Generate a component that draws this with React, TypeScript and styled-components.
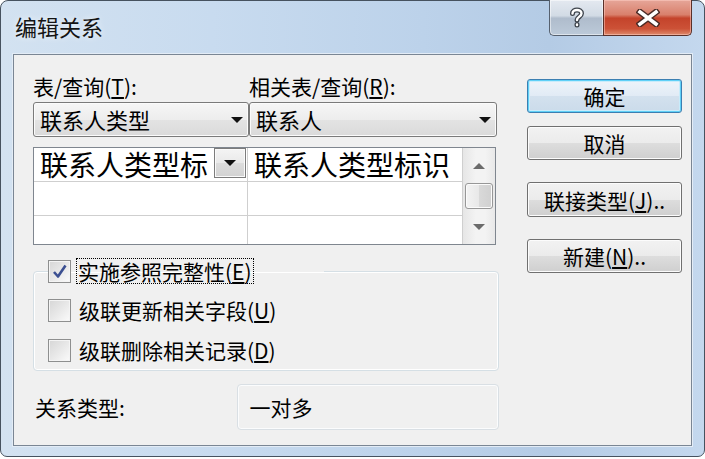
import React from 'react';
import styled, { createGlobalStyle, css } from 'styled-components';

const GlobalStyle = createGlobalStyle`
  html, body {
    margin: 0;
    padding: 0;
    background: #ffffff;
  }
  body {
    font-family: "Noto Sans CJK SC", "Noto Sans", sans-serif;
    font-size: 21px;
    color: #000;
  }
  * {
    box-sizing: border-box;
  }
`;

const Window = styled.div`
  width: 705px;
  height: 457px;
  display: flex;
  flex-direction: column;
  padding: 0 12px 10px 12px;
  border: 1px solid #46525f;
  border-radius: 8px 8px 7px 7px;
  background: linear-gradient(90deg, #d3e2f1 0%, #c8dbef 30%, #bcd2ea 60%, #b4cbe5 78%, #c4d8ee 100%);
`;

const TitleBar = styled.div`
  height: 53px;
  flex: none;
  display: flex;
  justify-content: space-between;
  align-items: flex-start;
`;

const Title = styled.div`
  margin: 12px 0 0 2px;
  font-size: 22px;
  line-height: 26px;
  color: #141414;
  text-shadow: 0 0 6px rgba(255, 255, 255, 0.8);
`;

const Captions = styled.div`
  display: flex;
  margin-top: -1px;
`;

const CaptionButton = styled.div<{ $kind: 'help' | 'close' }>`
  height: 36px;
  display: flex;
  align-items: center;
  justify-content: center;
  border: 1px solid #56606e;
  border-top: none;
  ${({ $kind }) =>
    $kind === 'help'
      ? css`
          width: 54px;
          border-radius: 0 0 0 5px;
          border-right: none;
          background: linear-gradient(180deg, #e4e9f0 0%, #d2dbe5 45%, #afbccc 52%, #bccad9 100%);
          box-shadow: inset 0 0 0 1px rgba(255, 255, 255, 0.5);
        `
      : css`
          width: 89px;
          border-radius: 0 0 5px 0;
          border-color: #5a3029;
          background: linear-gradient(180deg, #e6a699 0%, #d9806c 42%, #c4432b 52%, #cc5237 82%, #de8a6b 100%);
          box-shadow: inset 0 0 0 1px rgba(255, 210, 200, 0.5);
        `}
`;

const HelpIcon = () => (
  <svg width="16" height="22" viewBox="0 0 16 22">
    <g fill="none" strokeLinecap="round" strokeLinejoin="round">
      <path d="M3.5 6.5 C3.5 1.8 12.5 1.8 12.5 6.5 C12.5 9.5 8 9.8 8 13" stroke="#3d434b" strokeWidth="5" />
      <path d="M8 17.5 L8 18" stroke="#3d434b" strokeWidth="5" />
      <path d="M3.5 6.5 C3.5 1.8 12.5 1.8 12.5 6.5 C12.5 9.5 8 9.8 8 13" stroke="#ffffff" strokeWidth="2.4" />
      <path d="M8 17.5 L8 18" stroke="#ffffff" strokeWidth="2.4" />
    </g>
  </svg>
);

const CloseIcon = () => (
  <svg width="24" height="18" viewBox="0 0 24 18">
    <g strokeLinecap="square">
      <path d="M4 3 L20 15 M20 3 L4 15" stroke="#4a2a25" strokeWidth="6.5" />
      <path d="M4 3 L20 15 M20 3 L4 15" stroke="#ffffff" strokeWidth="3.6" />
    </g>
  </svg>
);

const Client = styled.div`
  flex: 1;
  display: flex;
  gap: 28px;
  padding: 15px 9px 15px 19px;
  background: #f0f0f0;
  border: 1px solid #7a8694;
  box-shadow: 0 0 0 1px #e3ecf6;
`;

const MainColumn = styled.div`
  width: 466px;
  display: flex;
  flex-direction: column;
`;

const SideColumn = styled.div`
  width: 155px;
  display: flex;
  flex-direction: column;
  padding-top: 9px;
`;

const PairRow = styled.div<{ $height: number }>`
  display: grid;
  grid-template-columns: 216px 248px;
  height: ${({ $height }) => $height}px;
`;

const Label = styled.div`
  font-size: 21px;
  line-height: 32px;
  white-space: nowrap;
`;

const Key = styled.span`
  text-decoration: underline;
  text-underline-offset: 2px;
`;

const Combo = styled.div`
  display: flex;
  align-items: center;
  justify-content: space-between;
  padding: 0 5px 0 6px;
  border: 1px solid #7a7a7a;
  border-radius: 3px;
  font-size: 22px;
  line-height: 33px;
  background: linear-gradient(180deg, #f6f6f6 0%, #ededed 50%, #e3e3e3 51%, #dadada 100%);
  box-shadow: inset 0 0 0 1px #fbfbfb;
`;

const Arrow = styled.span<{ $dir?: 'up' | 'down'; $color?: string }>`
  width: 0;
  height: 0;
  border-left: 6px solid transparent;
  border-right: 6px solid transparent;
  ${({ $dir = 'down', $color = '#111' }) =>
    $dir === 'down'
      ? css`
          border-top: 6px solid ${$color};
        `
      : css`
          border-bottom: 6px solid ${$color};
        `}
`;

const Table = styled.div`
  margin-top: 10px;
  width: 463px;
  height: 98px;
  display: flex;
  border: 1px solid #7f868f;
  background: #fff;
`;

const Cells = styled.div`
  display: grid;
  grid-template-columns: 214px 215px;
  grid-template-rows: 34px 34px 28px;
`;

const Cell = styled.div<{ $last?: boolean }>`
  display: flex;
  align-items: flex-start;
  justify-content: space-between;
  padding: 0 1px 0 6px;
  border-right: 1px solid #cfcfcf;
  border-bottom: ${({ $last }) => ($last ? 'none' : '1px solid #cfcfcf')};
  font-size: 28px;
  line-height: 33px;
  white-space: nowrap;
`;

const CellDrop = styled.div`
  width: 32px;
  height: 30px;
  flex: none;
  display: flex;
  align-items: center;
  justify-content: center;
  border: 1px solid #7c7c7c;
  background: linear-gradient(180deg, #f4f4f4 0%, #e9e9e9 50%, #dcdcdc 51%, #d2d2d2 100%);
  box-shadow: inset 0 0 0 1px #fafafa;
`;

const ScrollBar = styled.div`
  width: 32px;
  display: flex;
  flex-direction: column;
  background: linear-gradient(90deg, #e6e6e6 0%, #f3f3f3 40%, #f3f3f3 70%, #e8e8e8 100%);
`;

const ScrollEnd = styled.div<{ $height: number }>`
  height: ${({ $height }) => $height}px;
  display: flex;
  align-items: center;
  justify-content: center;
`;

const Thumb = styled.div`
  height: 26px;
  margin: 0 2px;
  border: 1px solid #979797;
  border-radius: 3px;
  background: linear-gradient(90deg, #f3f3f3 0%, #e8e8e8 50%, #d9d9d9 51%, #d0d0d0 100%);
  box-shadow: inset 0 0 0 1px #fbfbfb;
`;

const Group = styled.fieldset`
  margin: 13px 0 0 0;
  width: 466px;
  padding: 6px 0 0 14px;
  border: 1px solid #d5dfe5;
  border-radius: 4px;
  box-shadow: inset 0 0 0 1px #ffffff;
`;

const GroupLegend = styled.legend`
  padding: 0 70px 0 0;
  margin: 0;
  display: flex;
  align-items: center;
  gap: 5px;
  height: 26px;
`;

const CheckRow = styled.div`
  height: 40px;
  display: flex;
  align-items: center;
  gap: 6px;
`;

const Box = styled.span`
  width: 23px;
  height: 23px;
  flex: none;
  display: flex;
  align-items: center;
  justify-content: center;
  border: 1px solid #8e8f8f;
  background: linear-gradient(135deg, #d6d6d6 0%, #e6e6e6 45%, #fbfbfb 100%);
  box-shadow: inset 0 0 0 1px #f4f4f4;
`;

const CheckText = styled.span<{ $focused?: boolean }>`
  font-size: 21px;
  line-height: 24px;
  padding: 0 1px;
  white-space: nowrap;
  border: 1px dotted ${({ $focused }) => ($focused ? '#000' : 'transparent')};
`;

const Check = ({ checked }: { checked?: boolean }) => (
  <Box>
    {checked && (
      <svg width="17" height="17" viewBox="0 0 17 17">
        <path d="M3 9 L7 13.5 L14.5 2.5" fill="none" stroke="#3b4f91" strokeWidth="2.6" strokeLinejoin="round" />
      </svg>
    )}
  </Box>
);

const TypeRow = styled.div`
  margin-top: 13px;
  height: 46px;
  display: flex;
  align-items: center;
`;

const TypeLabel = styled.div`
  width: 204px;
  padding-left: 2px;
  font-size: 21px;
`;

const TypeField = styled.div`
  width: 263px;
  height: 46px;
  display: flex;
  align-items: center;
  padding-left: 12px;
  border: 1px solid #d9dfe4;
  border-radius: 4px;
  box-shadow: inset 0 0 0 1px #fbfcfd;
  font-size: 21px;
`;

const Button = styled.div<{ $default?: boolean; $top?: number; $height?: number }>`
  height: ${({ $height = 34 }) => $height}px;
  margin-top: ${({ $top = 0 }) => $top}px;
  display: flex;
  align-items: center;
  justify-content: center;
  font-size: 21px;
  white-space: nowrap;
  border-radius: 3px;
  ${({ $default }) =>
    $default
      ? css`
          border: 1px solid #3c7fb1;
          background: linear-gradient(180deg, #eef4fa 0%, #e1ebf5 50%, #d3e1ee 51%, #cbdbea 100%);
          box-shadow: inset 0 0 0 1px #5fd0f7, inset 0 0 0 2px #c8ecfb;
        `
      : css`
          border: 1px solid #707070;
          background: linear-gradient(180deg, #f2f2f2 0%, #ebebeb 50%, #dddddd 51%, #cfcfcf 100%);
          box-shadow: inset 0 0 0 1px #fcfcfc;
        `}
`;

const App = () => (
  <>
    <GlobalStyle />
    <Window>
      <TitleBar>
        <Title>编辑关系</Title>
        <Captions>
          <CaptionButton $kind="help">
            <HelpIcon />
          </CaptionButton>
          <CaptionButton $kind="close">
            <CloseIcon />
          </CaptionButton>
        </Captions>
      </TitleBar>
      <Client>
        <MainColumn>
          <PairRow $height={32}>
            <Label>
              表/查询(<Key>T</Key>):
            </Label>
            <Label>
              相关表/查询(<Key>R</Key>):
            </Label>
          </PairRow>
          <PairRow $height={35}>
            <Combo>
              <span>联系人类型</span>
              <Arrow />
            </Combo>
            <Combo>
              <span>联系人</span>
              <Arrow />
            </Combo>
          </PairRow>
          <Table>
            <Cells>
              <Cell>
                <span>联系人类型标</span>
                <CellDrop>
                  <Arrow />
                </CellDrop>
              </Cell>
              <Cell>
                <span>联系人类型标识</span>
              </Cell>
              <Cell />
              <Cell />
              <Cell $last />
              <Cell $last />
            </Cells>
            <ScrollBar>
              <ScrollEnd $height={35}>
                <Arrow $dir="up" $color="#6b6b6b" />
              </ScrollEnd>
              <Thumb />
              <ScrollEnd $height={35}>
                <Arrow $dir="down" $color="#6b6b6b" />
              </ScrollEnd>
            </ScrollBar>
          </Table>
          <Group>
            <GroupLegend>
              <Check checked />
              <CheckText $focused>
                实施参照完整性(<Key>E</Key>)
              </CheckText>
            </GroupLegend>
            <CheckRow>
              <Check />
              <CheckText>
                级联更新相关字段(<Key>U</Key>)
              </CheckText>
            </CheckRow>
            <CheckRow>
              <Check />
              <CheckText>
                级联删除相关记录(<Key>D</Key>)
              </CheckText>
            </CheckRow>
          </Group>
          <TypeRow>
            <TypeLabel>关系类型:</TypeLabel>
            <TypeField>一对多</TypeField>
          </TypeRow>
        </MainColumn>
        <SideColumn>
          <Button $default>确定</Button>
          <Button $top={13}>取消</Button>
          <Button $top={22} $height={35}>
            联接类型(<Key>J</Key>)..
          </Button>
          <Button $top={22}>
            新建(<Key>N</Key>)..
          </Button>
        </SideColumn>
      </Client>
    </Window>
  </>
);

export default App;
